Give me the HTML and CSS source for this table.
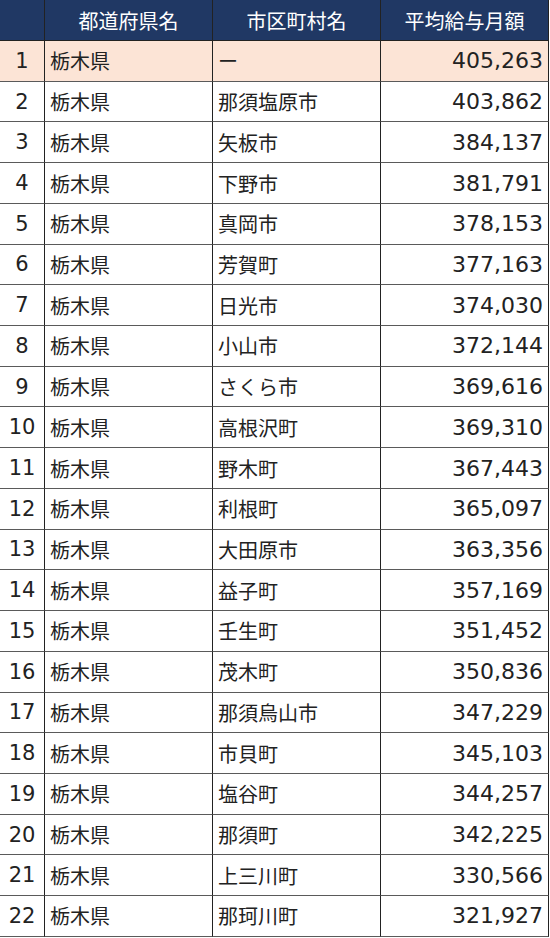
FILE: index.html
```html
<!DOCTYPE html>
<html lang="ja">
<head>
<meta charset="utf-8">
<link rel="stylesheet" href="styles.css">
</head>
<body>
<table class="rank">
<colgroup><col class="c-no"><col class="c-pref"><col class="c-city"><col class="c-val"></colgroup>
<thead>
<tr><th></th><th>都道府県名</th><th>市区町村名</th><th>平均給与月額</th></tr>
</thead>
<tbody>
<tr class="hl"><td class="no">1</td><td>栃木県</td><td>ー</td><td class="num">405,263</td></tr>
<tr><td class="no">2</td><td>栃木県</td><td>那須塩原市</td><td class="num">403,862</td></tr>
<tr><td class="no">3</td><td>栃木県</td><td>矢板市</td><td class="num">384,137</td></tr>
<tr><td class="no">4</td><td>栃木県</td><td>下野市</td><td class="num">381,791</td></tr>
<tr><td class="no">5</td><td>栃木県</td><td>真岡市</td><td class="num">378,153</td></tr>
<tr><td class="no">6</td><td>栃木県</td><td>芳賀町</td><td class="num">377,163</td></tr>
<tr><td class="no">7</td><td>栃木県</td><td>日光市</td><td class="num">374,030</td></tr>
<tr><td class="no">8</td><td>栃木県</td><td>小山市</td><td class="num">372,144</td></tr>
<tr><td class="no">9</td><td>栃木県</td><td>さくら市</td><td class="num">369,616</td></tr>
<tr><td class="no">10</td><td>栃木県</td><td>高根沢町</td><td class="num">369,310</td></tr>
<tr><td class="no">11</td><td>栃木県</td><td>野木町</td><td class="num">367,443</td></tr>
<tr><td class="no">12</td><td>栃木県</td><td>利根町</td><td class="num">365,097</td></tr>
<tr><td class="no">13</td><td>栃木県</td><td>大田原市</td><td class="num">363,356</td></tr>
<tr><td class="no">14</td><td>栃木県</td><td>益子町</td><td class="num">357,169</td></tr>
<tr><td class="no">15</td><td>栃木県</td><td>壬生町</td><td class="num">351,452</td></tr>
<tr><td class="no">16</td><td>栃木県</td><td>茂木町</td><td class="num">350,836</td></tr>
<tr><td class="no">17</td><td>栃木県</td><td>那須烏山市</td><td class="num">347,229</td></tr>
<tr><td class="no">18</td><td>栃木県</td><td>市貝町</td><td class="num">345,103</td></tr>
<tr><td class="no">19</td><td>栃木県</td><td>塩谷町</td><td class="num">344,257</td></tr>
<tr><td class="no">20</td><td>栃木県</td><td>那須町</td><td class="num">342,225</td></tr>
<tr><td class="no">21</td><td>栃木県</td><td>上三川町</td><td class="num">330,566</td></tr>
<tr><td class="no">22</td><td>栃木県</td><td>那珂川町</td><td class="num">321,927</td></tr>
</tbody>
</table>
</body>
</html>
```
FILE: styles.css
```css
html, body {
  margin: 0;
  padding: 0;
  background: #ffffff;
}
.rank {
  border-collapse: separate;
  border-spacing: 0;
  table-layout: fixed;
  width: 549px;
  font-family: "DejaVu Sans", "Noto Sans CJK JP", sans-serif;
  font-size: 20px;
  color: #222222;
}
.c-no { width: 45px; }
.c-pref { width: 168px; }
.c-city { width: 168px; }
.c-val { width: 168px; }
.rank th, .rank td {
  border-right: 1px solid #222222;
  border-bottom: 1px solid #5a5a5a;
  padding: 0 5px;
  white-space: nowrap;
  overflow: hidden;
}
.rank th {
  background: #203864;
  color: #ffffff;
  font-weight: normal;
  text-align: center;
  box-sizing: border-box;
  height: 41px;
  border-bottom-color: #222222;
  font-family: "Noto Sans CJK JP", sans-serif;
}
.rank td {
  box-sizing: border-box;
  height: 40.73px;
  text-align: left;
}
.rank td.no {
  text-align: center;
  padding: 0;
  font-size: 21px;
}
.rank td.num {
  text-align: right;
  font-size: 22px;
  padding-right: 5px;
}
.rank tr.hl td {
  background: #fce4d6;
}
```
